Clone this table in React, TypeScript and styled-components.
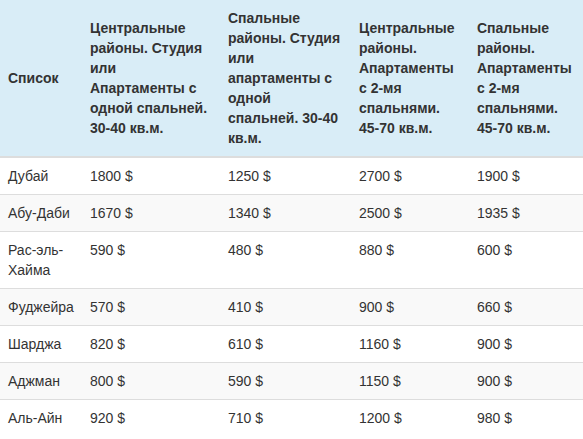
import React from 'react';
import styled, { createGlobalStyle } from 'styled-components';

const GlobalStyle = createGlobalStyle`
    html, body {
        margin: 0;
        padding: 0;
        background: #fff;
    }
`;

const Table = styled.table`
    width: 583px;
    table-layout: fixed;
    border-collapse: collapse;
    border-spacing: 0;
    font-family: 'Liberation Sans', Arial, sans-serif;
    font-size: 14px;
    line-height: 20px;
    color: #333;
`;

const HeadRow = styled.tr`
    background-color: #d9edf7;
`;

const HeadCell = styled.th`
    padding: 8px;
    text-align: left;
    vertical-align: middle;
    font-weight: bold;
    border-bottom: 2px solid #ddd;
`;

const Row = styled.tr<{ $striped: boolean }>`
    background-color: ${(p) => (p.$striped ? '#f9f9f9' : '#fff')};
`;

const Cell = styled.td`
    padding: 8px;
    vertical-align: top;
    border-top: 1px solid #ddd;
`;

const COLUMNS = [82, 138, 131, 118, 114];

const HEADERS = [
    'Список',
    'Центральные районы. Студия или Апартаменты с одной спальней. 30-40 кв.м.',
    'Спальные районы. Студия или апартаменты с одной спальней. 30-40 кв.м.',
    'Центральные районы. Апартаменты с 2-мя спальнями. 45-70 кв.м.',
    'Спальные районы. Апартаменты с 2-мя спальнями. 45-70 кв.м.',
];

const ROWS = [
    ['Дубай', '1800 $', '1250 $', '2700 $', '1900 $'],
    ['Абу-Даби', '1670 $', '1340 $', '2500 $', '1935 $'],
    ['Рас-эль-Хайма', '590 $', '480 $', '880 $', '600 $'],
    ['Фуджейра', '570 $', '410 $', '900 $', '660 $'],
    ['Шарджа', '820 $', '610 $', '1160 $', '900 $'],
    ['Аджман', '800 $', '590 $', '1150 $', '900 $'],
    ['Аль-Айн', '920 $', '710 $', '1200 $', '980 $'],
];

const App = () => (
    <>
        <GlobalStyle />
        <Table>
            <colgroup>
                {COLUMNS.map((w, i) => (
                    <col key={i} style={{ width: w }} />
                ))}
            </colgroup>
            <thead>
                <HeadRow>
                    {HEADERS.map((h) => (
                        <HeadCell key={h}>{h}</HeadCell>
                    ))}
                </HeadRow>
            </thead>
            <tbody>
                {ROWS.map((row, i) => (
                    <Row key={row[0]} $striped={i % 2 === 1}>
                        {row.map((value, j) => (
                            <Cell key={j}>{value}</Cell>
                        ))}
                    </Row>
                ))}
            </tbody>
        </Table>
    </>
);

export default App;
